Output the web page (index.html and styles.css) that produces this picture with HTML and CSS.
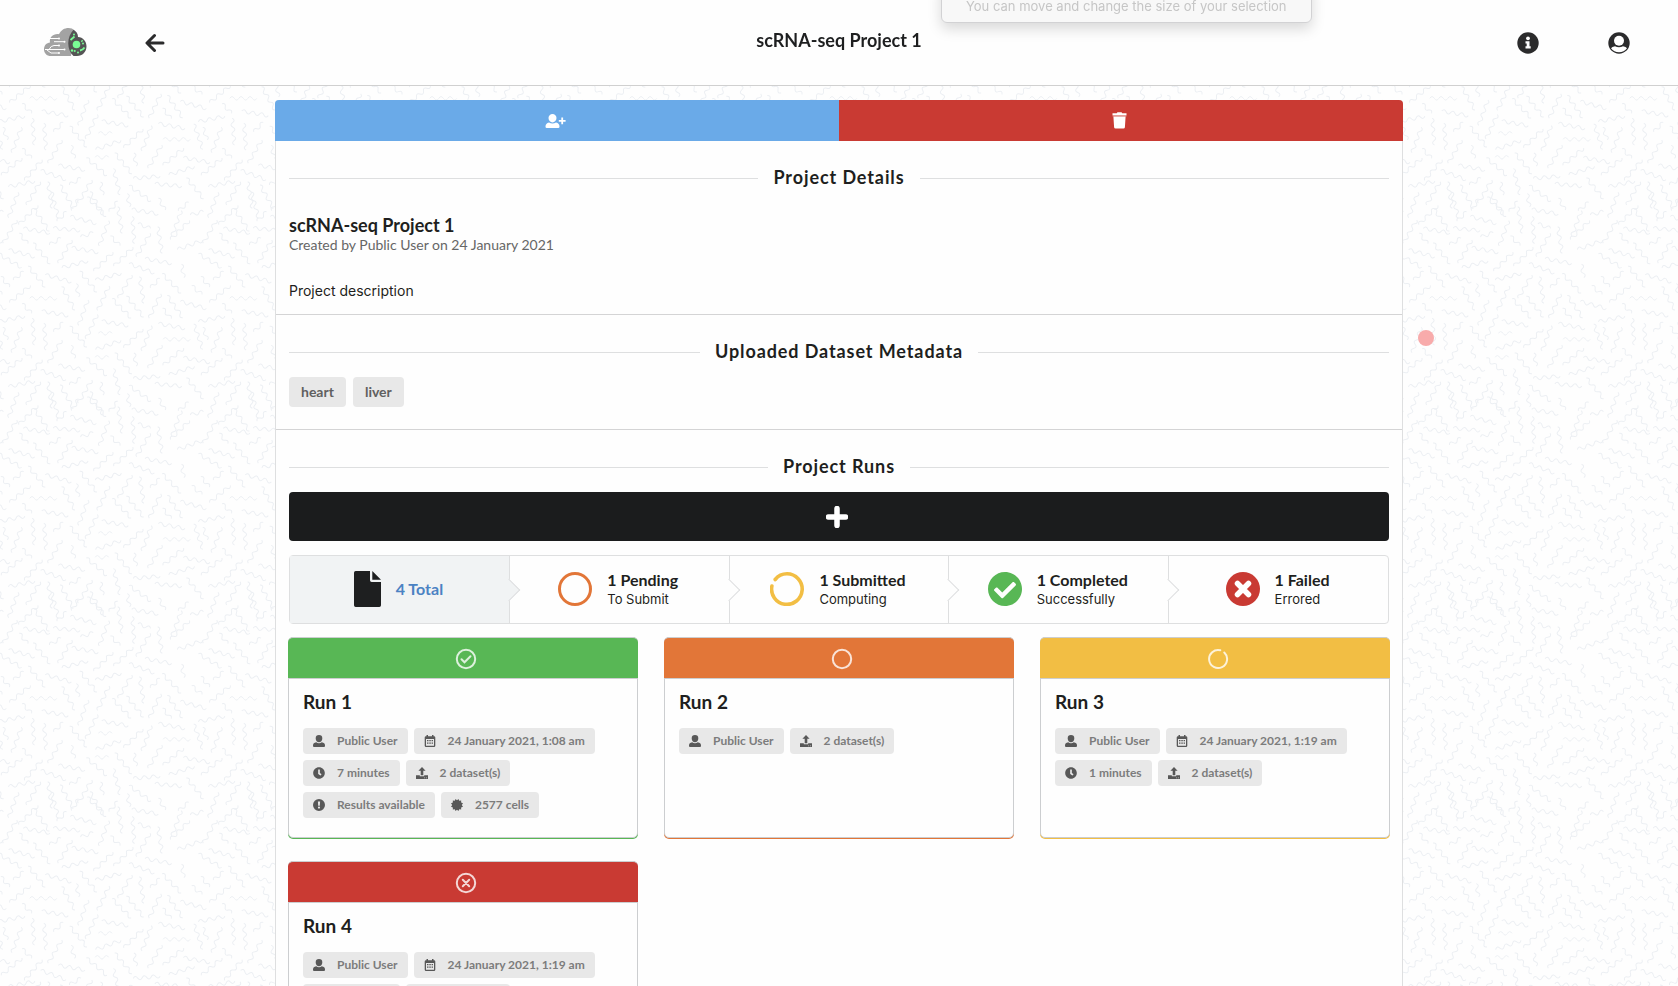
FILE: index.html
```html
<!DOCTYPE html>
<html lang="en">
<head>
<meta charset="utf-8">
<title>scRNA-seq Project 1</title>
<link rel="stylesheet" href="styles.css">
</head>
<body>
<svg class="defs" aria-hidden="true">
  <defs>
    <symbol id="i-user" viewBox="0 0 12 12"><path d="M6 0a3.3 3.3 0 0 1 3.3 3.4C9.300 5.500 7.800 7.200 6 7.200S2.700 5.500 2.700 3.400A3.300 3.300 0 0 1 6 0zM3.200 7.300Q6 9.400 8.800 7.300 12 7.900 12 10.500V11q0 1-1 1H1q-1 0-1-1v-.5Q0 7.900 3.200 7.300z"/></symbol>
    <symbol id="i-calendar" viewBox="0 0 12 12"><path fill-rule="evenodd" d="M2.500 0H4v1.300h4V0h1.500v1.300h.5q1.300 0 1.300 1.200v8.200Q11.300 12 10 12H2Q.7 12 .7 10.700V2.500Q.7 1.300 2 1.300h.5zM2 4v6.700h8V4zM3 5h1.500v1.200H3zm2.300 0h1.500v1.200H5.300zm2.300 0H9v1.200H7.600zM3 7.500h1.500v1.200H3zm2.300 0h1.500v1.200H5.300zm2.300 0H9v1.200H7.600z"/></symbol>
    <symbol id="i-clock" viewBox="0 0 512 512"><path d="M256 8C119 8 8 119 8 256s111 248 248 248 248-111 248-248S393 8 256 8zm57.100 350.100L224.900 294c-3.100-2.300-4.900-5.900-4.900-9.700V116c0-6.600 5.400-12 12-12h48c6.600 0 12 5.400 12 12v137.700l63.500 46.200c5.400 3.900 6.500 11.400 2.600 16.800l-28.200 38.800c-3.900 5.300-11.400 6.500-16.800 2.600z"/></symbol>
    <symbol id="i-upload" viewBox="0 0 12 12"><path fill-rule="evenodd" d="M6 0l3.600 3.800H7.300v4.400H4.700V3.800H2.400zM0 8.300h3.800v1h4.400v-1H12V12H0zM8.300 10.400v.8h.8v-.8zm1.700 0v.8h.8v-.8z"/></symbol>
    <symbol id="i-alert" viewBox="0 0 12 12"><path fill-rule="evenodd" d="M6 0a6 6 0 1 1 0 12A6 6 0 0 1 6 0zM4.900 2.400l.3 4.300h1.600l.3-4.300zM6 7.500A1.100 1.100 0 1 0 6 9.700 1.100 1.100 0 0 0 6 7.500z"/></symbol>
    <symbol id="i-cell" viewBox="0 0 12 12"><path d="M6 1.300L7.500 0l.7 1.800 2-.2-.1 1.900 1.900.7L10.800 6l1.200 1.700-1.900.7.1 2-2-.2L7.500 12 6 10.800 4.500 12l-.7-1.800-2 .2.100-2L0 7.700 1.200 6 0 4.200l1.900-.7-.1-1.900 2 .2L4.500 0z"/></symbol>
    <symbol id="i-file" viewBox="0 0 27 36"><path d="M1.700 0H16v9.300q0 1.700 1.700 1.700H27v23.300q0 1.700-1.700 1.700H1.700Q0 36 0 34.300V1.700Q0 0 1.700 0zM18.300 0L27 8.700H18.300z"/></symbol>
    <symbol id="i-ring" viewBox="0 0 34 34"><circle cx="17" cy="17" r="15.500" fill="none" stroke="currentColor" stroke-width="3"/></symbol>
    <symbol id="i-ring-open" viewBox="0 0 34 34"><path d="M1.900 14A15.300 15.300 0 1 0 17 1.800 15.300 15.300 0 0 0 5.200 7.500" fill="none" stroke="currentColor" stroke-width="3.600" stroke-linecap="round"/></symbol>
    <symbol id="i-check" viewBox="8 8 496 496"><path d="M504 256c0 136.967-111.033 248-248 248S8 392.967 8 256 119.033 8 256 8s248 111.033 248 248zM227.314 387.314l184-184c6.248-6.248 6.248-16.379 0-22.627l-22.627-22.627c-6.248-6.249-16.379-6.249-22.628 0L216 308.118l-70.059-70.059c-6.248-6.248-16.379-6.248-22.628 0l-22.627 22.627c-6.248 6.248-6.248 16.379 0 22.627l104 104c6.249 6.249 16.379 6.249 22.628.001z"/></symbol>
    <symbol id="i-cross" viewBox="0 0 34 34"><circle cx="17" cy="17" r="17"/><path d="M11.500 11.500l11 11m0-11l-11 11" stroke="#fff" stroke-width="5.500" stroke-linecap="round"/></symbol>
  </defs>
</svg>

<svg class="backdrop" aria-hidden="true">
  <defs><pattern id="squiggles" width="200" height="200" patternUnits="userSpaceOnUse"></pattern></defs>
  <rect width="100%" height="100%" fill="url(#squiggles)"/>
</svg>

<header class="topbar">
  <nav class="topbar-side">
    <a class="logo" href="#" aria-label="Home">
      <svg width="43" height="28" viewBox="0 0 43 28">
        <path fill="#a3a3a3" d="M27 28H7C2.500 28 0 25 0 21.200c0-3.600 2.500-6.400 6-6.700C5 9.500 9 5.500 15 6.200 17 2 20.500 0 24.500 0c2.500 0 4.500.8 6 2.500z"/>
        <path fill="#555" d="M29.500 1.800C32.500 3.400 34 6 34 9c5 .3 8.500 4.300 8.500 9.300C42.500 24 38.500 28 33 28h-3.500C22.500 22 22.500 9 29.500 1.800z"/>
        <g fill="none" stroke="#fff" stroke-width="1"><path d="M6 10.500h9M10 13.700h10.500M1 21.500h4q2-4 5-4h5M5 21.500h15.500M3 22l4 3h8"/></g>
        <g fill="#fff"><circle cx="15" cy="10.500" r="1"/><circle cx="20.500" cy="13.700" r="1"/><circle cx="15" cy="17.500" r="1"/><circle cx="20.500" cy="21.500" r="1"/><circle cx="15" cy="25" r="1"/></g>
        <g fill="#79fb94"><circle cx="32.500" cy="16.500" r="3.800"/><circle cx="30" cy="6.500" r="1"/><circle cx="28" cy="22.500" r="1.200"/><circle cx="34" cy="24.500" r="1"/><circle cx="39" cy="15.500" r="1"/></g>
        <path fill="none" stroke="#79fb94" stroke-width="1.800" d="M26.500 12l4-3.500M36 22.500q3-.5 4.500-3M30 22.500l1.500 1M37.500 12.500l1 1"/>
      </svg>
    </a>
    <button class="icon-button" aria-label="Back">
      <svg class="line-icon" width="20" height="20" viewBox="0 0 20 20"><path d="M9.500 2.500L2 10l7.500 7.500M2.500 10h15.500"/></svg>
    </button>
  </nav>
  <h1 class="topbar-title">scRNA-seq Project 1</h1>
  <nav class="topbar-side topbar-right">
    <button class="icon-button" aria-label="Information">
      <svg width="22" height="22" viewBox="0 0 22 22"><circle cx="11" cy="11" r="10.700" fill="#2b2b2c"/><circle cx="11" cy="6.300" r="1.900" fill="#fff"/><path fill="#fff" d="M8.500 9.200h4v5h1.200v2.200H8.500v-2.200h1.200v-2.800H8.500z"/></svg>
    </button>
    <button class="icon-button" aria-label="Account">
      <svg width="22" height="22" viewBox="0 0 22 22"><circle cx="11" cy="11" r="10.700" fill="#2b2b2c"/><circle cx="11" cy="8.700" r="5" fill="#fff"/><path fill="#fff" d="M7 14.300q4 2 8 0 3 .5 4 2Q16 20.300 11 20.300T3 16.300q1-1.500 4-2z"/></svg>
    </button>
  </nav>
  <div class="hint" role="tooltip">You can move and change the size of your selection</div>
</header>

<span class="pointer-dot"></span>

<main class="panel">
  <div class="actions">
    <button class="action share" aria-label="Share project">
      <svg width="21" height="16" viewBox="0 0 21 16"><path d="M7.500 1a4 4 0 0 1 4 4.100c0 2.400-1.800 4.400-4 4.400s-4-2-4-4.400A4 4 0 0 1 7.500 1zM4 9.400q3.500 2 7 0 3.500.8 3.500 4v.3q0 1.300-1.300 1.300H1.800Q.5 15 .5 13.700v-.3q0-3.200 3.500-4zM16.300 4.500h1.800V7h2.500v1.800h-2.500v2.500h-1.800V8.800h-2.500V7h2.500z"/></svg>
    </button>
    <button class="action delete" aria-label="Delete project">
      <svg width="15" height="17" viewBox="0 0 15 17"><path d="M.5 1.300h4.200L5.500.3h4l.8 1h4.200v1.700H.5zM1.400 4.400h12.200l-.7 10.800q-.1 1.400-1.500 1.400H3.600q-1.400 0-1.500-1.400z"/><path opacity=".5" d="M.5 3h14v1.400H.5z"/></svg>
    </button>
  </div>

  <section class="section details">
    <h2 class="divider">Project Details</h2>
    <div class="project">
      <h3 class="project-name">scRNA-seq Project 1</h3>
      <p class="project-meta">Created by Public User on 24 January 2021</p>
    </div>
    <p class="project-text">Project description</p>
  </section>

  <section class="section metadata">
    <h2 class="divider">Uploaded Dataset Metadata</h2>
    <div class="tags"><span class="tag">heart</span><span class="tag">liver</span></div>
  </section>

  <section class="section runs">
    <h2 class="divider">Project Runs</h2>
    <button class="add-run" aria-label="Add run">
      <svg width="22" height="22" viewBox="0 0 22 22"><path d="M11 2.500v17M2.500 11h17" stroke="#fff" stroke-width="5.500" stroke-linecap="round"/></svg>
    </button>

    <div class="steps">
      <a class="step active" href="#"><svg class="step-icon file"><use href="#i-file"/></svg><span class="step-title">4 Total</span></a>
      <a class="step" href="#"><svg class="step-icon orange"><use href="#i-ring"/></svg><span><span class="step-title">1 Pending</span><span class="step-text">To Submit</span></span></a>
      <a class="step" href="#"><svg class="step-icon yellow"><use href="#i-ring-open"/></svg><span><span class="step-title">1 Submitted</span><span class="step-text">Computing</span></span></a>
      <a class="step" href="#"><svg class="step-icon green"><use href="#i-check"/></svg><span><span class="step-title">1 Completed</span><span class="step-text">Successfully</span></span></a>
      <a class="step" href="#"><svg class="step-icon red"><use href="#i-cross"/></svg><span><span class="step-title">1 Failed</span><span class="step-text">Errored</span></span></a>
    </div>

    <div class="cards">
      <article class="card green">
        <div class="card-status"><svg width="22" height="22" viewBox="-1 -1 22 22"><circle cx="10" cy="10" r="9.200"/><path class="mark" d="M5.500 10.300l3 3 6-6"/></svg></div>
        <div class="card-body">
          <h3 class="card-title">Run 1</h3>
          <div class="labels">
            <span class="label"><svg><use href="#i-user"/></svg>Public User</span>
            <span class="label"><svg><use href="#i-calendar"/></svg>24 January 2021, 1:08 am</span>
            <span class="label"><svg><use href="#i-clock"/></svg>7 minutes</span>
            <span class="label"><svg><use href="#i-upload"/></svg>2 dataset(s)</span>
            <span class="label"><svg><use href="#i-alert"/></svg>Results available</span>
            <span class="label"><svg><use href="#i-cell"/></svg>2577 cells</span>
          </div>
        </div>
      </article>
      <article class="card orange">
        <div class="card-status"><svg width="22" height="22" viewBox="-1 -1 22 22"><circle cx="10" cy="10" r="9.200"/></svg></div>
        <div class="card-body">
          <h3 class="card-title">Run 2</h3>
          <div class="labels">
            <span class="label"><svg><use href="#i-user"/></svg>Public User</span>
            <span class="label"><svg><use href="#i-upload"/></svg>2 dataset(s)</span>
          </div>
        </div>
      </article>
      <article class="card yellow">
        <div class="card-status"><svg width="22" height="22" viewBox="-1 -1 22 22"><path class="mark" d="M12.300 1.300A9 9 0 1 0 16.300 3.500"/></svg></div>
        <div class="card-body">
          <h3 class="card-title">Run 3</h3>
          <div class="labels">
            <span class="label"><svg><use href="#i-user"/></svg>Public User</span>
            <span class="label"><svg><use href="#i-calendar"/></svg>24 January 2021, 1:19 am</span>
            <span class="label"><svg><use href="#i-clock"/></svg>1 minutes</span>
            <span class="label"><svg><use href="#i-upload"/></svg>2 dataset(s)</span>
          </div>
        </div>
      </article>
      <article class="card red">
        <div class="card-status"><svg width="22" height="22" viewBox="-1 -1 22 22"><circle cx="10" cy="10" r="9.200"/><path class="mark" d="M6.800 6.800l6.400 6.400m0-6.400l-6.400 6.400"/></svg></div>
        <div class="card-body">
          <h3 class="card-title">Run 4</h3>
          <div class="labels">
            <span class="label"><svg><use href="#i-user"/></svg>Public User</span>
            <span class="label"><svg><use href="#i-calendar"/></svg>24 January 2021, 1:19 am</span>
            <span class="label"><svg><use href="#i-clock"/></svg>1 minutes</span>
            <span class="label"><svg><use href="#i-upload"/></svg>2 dataset(s)</span>
          </div>
        </div>
      </article>
    </div>
  </section>
</main>
<script src="script.js"></script>
</body>
</html>
```

FILE: styles.css
```css
* { box-sizing: border-box; }

body {
  margin: 0;
  background: #fefefe;
  color: #1e1f20;
  font-family: Lato, "Open Sans", sans-serif;
  font-size: 14px;
  line-height: 18px;
}

h1, h2, h3, p { margin: 0; }
button { padding: 0; border: 0; font: inherit; cursor: pointer; }
a { color: inherit; text-decoration: none; }
svg { display: block; fill: currentColor; }

.defs { position: absolute; width: 0; height: 0; }
.backdrop { position: fixed; inset: 0; width: 100%; height: 100%; z-index: -1; }
.squiggle { fill: none; stroke: #eceff3; stroke-width: 1; }

/* Top bar */
.topbar {
  position: relative;
  display: grid;
  grid-template-columns: 1fr auto 1fr;
  align-items: center;
  min-height: 86px;
  padding: 0 44px;
  background: #fefefe;
  border-bottom: 1px solid #d0d0d0;
}
.topbar-side { display: flex; align-items: center; gap: 58px; }
.topbar-right { justify-content: flex-end; gap: 69px; padding-right: 4px; }
.topbar-title { padding-bottom: 6px; font-size: 18px; line-height: 22px; }
.logo { padding-bottom: 2px; }
.icon-button { background: none; }
.line-icon {
  fill: none;
  stroke: #2b2b2c;
  stroke-width: 3;
  stroke-linecap: round;
  stroke-linejoin: round;
}

.hint {
  position: absolute;
  top: -20px;
  left: calc(50% + 102px);
  padding: 15px 24px 6px;
  border: 1px solid #d2d2d4;
  border-radius: 6px;
  background: #f8f8f8;
  box-shadow: 0 6px 14px #00000026;
  color: #c6c6c6;
  font-family: Inter, sans-serif;
  font-size: 13px;
  line-height: 20px;
  white-space: nowrap;
}
.pointer-dot {
  position: absolute;
  top: 330px;
  left: calc(50% + 579px);
  width: 16px;
  height: 16px;
  border-radius: 50%;
  background: #f8abab;
}

/* Panel */
.panel {
  width: 100%;
  max-width: 1128px;
  margin: 14px auto;
  background: #fefefe;
  border: 1px solid #dedfe0;
  border-top: 0;
  border-radius: 4px;
}
.actions { display: flex; margin: 0 -1px; }
.action {
  display: flex;
  flex: 1;
  align-items: center;
  justify-content: center;
  height: 41px;
  padding-right: 4px;
  color: #fff;
}
.share { background: #6aaae8; border-radius: 4px 0 0 0; }
.delete { background: #c93a33; border-radius: 0 4px 0 0; }

.section { padding: 26px 13px 0; border-bottom: 1px solid #d4d4d5; }
.details { padding-bottom: 13px; }
.metadata { padding-bottom: 22px; }
.runs { padding-bottom: 20px; border-bottom: 0; }

.divider {
  display: flex;
  align-items: center;
  gap: 15px;
  font-size: 18px;
  line-height: 20px;
  letter-spacing: .05em;
}
.divider::before, .divider::after { content: ""; flex: 1; height: 1px; margin-top: 3px; background: #dedfe0; }

.project { margin: 27px 0; }
.project-name { font-size: 18px; line-height: 22px; }
.project-meta { color: #666; }
.project-text { font-family: Inter, sans-serif; font-size: 14px; line-height: 20px; }

.tags { display: flex; gap: 7px; margin-top: 16px; }
.tag { padding: 6px 12px; border-radius: 4px; background: #e8e8e8; color: #606060; font-weight: bold; }

.add-run {
  display: flex;
  align-items: center;
  justify-content: center;
  width: 100%;
  height: 49px;
  margin: 16px 0 14px;
  padding-right: 4px;
  border-radius: 4px;
  background: #1b1c1d;
}

/* Steps */
.steps { display: flex; border: 1px solid #dedfe0; border-radius: 4px; }
.step {
  position: relative;
  display: flex;
  flex: 1;
  align-items: center;
  justify-content: center;
  gap: 15px;
  min-height: 67px;
  padding: 0 2px 2px 0;
  border-right: 1px solid #dedfe0;
}
.step:last-child { border-right: 0; }
.step:not(:last-child)::after {
  content: "";
  position: absolute;
  top: 50%;
  right: 0;
  z-index: 1;
  width: 15px;
  height: 15px;
  background: #fefefe;
  border: solid #dedfe0;
  border-width: 0 1px 1px 0;
  transform: translate(50%, -50%) rotate(-45deg);
}
.step.active, .step.active::after { background: #f1f3f4; }
.step-icon { width: 34px; height: 34px; }
.step-icon.file { width: 27px; height: 36px; }
.step-title, .step-text { display: block; }
.step-title { font-size: 16px; line-height: 20px; font-weight: bold; }
.active .step-title { color: #4b82c3; }
.step-text { font-family: Inter, sans-serif; font-size: 13px; }

.green { color: #58b755; }
.orange { color: #e27638; }
.yellow { color: #f2be44; }
.red { color: #c93a33; }

/* Run cards */
.cards {
  display: grid;
  grid-template-columns: repeat(3, 1fr);
  gap: 23px 26px;
  margin: 13px -1px 0;
}
.card {
  min-height: 201px;
  background: #fefefe;
  border: 1px solid #ccced0;
  border-radius: 5px;
  box-shadow: 0 1px 0 currentColor;
}
.card-status {
  display: flex;
  align-items: center;
  justify-content: center;
  height: 42px;
  margin: -1px -1px 0;
  padding: 2px 0 0 6px;
  background: currentColor;
  border: 1px solid #ccced0;
  border-width: 1px 0;
  border-radius: 5px 5px 0 0;
}
.card-status svg { fill: none; stroke: #ffffffcc; stroke-width: 2; }
.card-status .mark { stroke-linecap: round; }
.card-body { padding: 11px 14px 19px; color: #1e1f20; }
.card-title { font-size: 19px; line-height: 24px; }
.labels { display: flex; flex-wrap: wrap; gap: 6px; margin-top: 14px; }
.label {
  display: flex;
  align-items: center;
  gap: 12px;
  height: 26px;
  padding: 0 10px;
  border-radius: 4px;
  background: #e8e8e8;
  color: #7c7c7c;
  font-size: 12px;
  font-weight: bold;
}
.label svg { width: 12px; height: 12px; color: #585858; }
```

FILE: script.js
```js
// Squiggles of one background tile: centre x, centre y, angle, 1 if short (in a 600-unit tile).
const squiggles = [
  [40,15,-70],[85,45,-45],[125,60,55],[165,15,75],[185,50,-45,1],[225,15,-60,1],[250,60,15],[290,20,45],[340,20,-50,1],
  [360,60,80],[400,90,85],[435,35,10],[432,78,20,1],[485,12,60,1],[480,120,80],[530,70,-70],[550,20,-40,1],[590,40,-15,1],
  [540,90,-45],[570,135,-20],[200,88,5],[110,92,10],[30,95,-60],[260,105,-20,1],[312,100,-70],[345,122,45,1],[430,135,-60],
  [70,115,50,1],[165,125,-30,1],[195,155,-60],[255,150,10],[65,160,15],[125,160,50],[30,182,30],[225,193,-15],[310,185,-45],
  [370,170,-45],[475,183,10],[425,205,20],[548,212,80,1],[55,228,-40,1],[110,230,50],[175,235,15],[265,245,50],[325,230,-15],
  [15,245,50,1],[60,282,-40],[205,295,60],[232,270,80,1],[375,260,-60],[425,270,80],[465,250,-45,1],[515,250,45],[590,270,40,1],
  [130,295,0],[310,295,-65],[365,325,45],[405,320,50],[465,318,-65],[525,320,55],[580,315,15],[80,325,45,1],[165,340,10],
  [35,357,-12],[250,338,-70],[500,340,50,1],[345,370,10],[275,380,-65],[315,400,0,1],[100,395,85],[135,410,85],[175,382,-45,1],
  [50,420,-70],[15,400,70,1],[235,410,50],[400,415,-45],[440,415,-70],[515,378,10],[530,418,0],[595,410,70],[325,435,-20],
  [165,455,-60],[218,455,75,1],[80,460,45,1],[100,510,-50],[35,500,-40],[215,503,10],[290,500,40],[305,472,0,1],[370,490,50],
  [405,478,80,1],[465,470,-60],[520,470,-40],[590,480,10],[545,512,-18],[160,525,20],[440,532,-5],[350,545,75],[225,545,-30,1],
  [255,575,-60],[65,552,-12],[505,555,5],[420,580,35],[585,565,50],[305,565,80,1],[385,600,80,1],[150,585,80],[100,580,-60],
  [200,590,60],[290,610,60]
];

const long = "M-13.500 0q2.200-3.500 4.500 0t4.500 0 4.500 0 4.500 0 4.500 0 4.500 0";
const short = "M-6.500 0q2.200-3.500 4.500 0t4.500 0 4.500 0";
const pattern = document.getElementById("squiggles");

for (const [x, y, angle, isShort] of squiggles) {
  // Shapes near an edge are repeated on the opposite side so that the tile joins up.
  for (const dx of [-200, 0, 200]) {
    for (const dy of [-200, 0, 200]) {
      const cx = x / 3 + dx, cy = y / 3 + dy;
      if (cx < -15 || cx > 215 || cy < -15 || cy > 215) continue;
      const path = document.createElementNS("http://www.w3.org/2000/svg", "path");
      path.setAttribute("class", "squiggle");
      path.setAttribute("d", isShort ? short : long);
      path.setAttribute("transform", `translate(${cx} ${cy}) rotate(${angle})`);
      pattern.append(path);
    }
  }
}
```
